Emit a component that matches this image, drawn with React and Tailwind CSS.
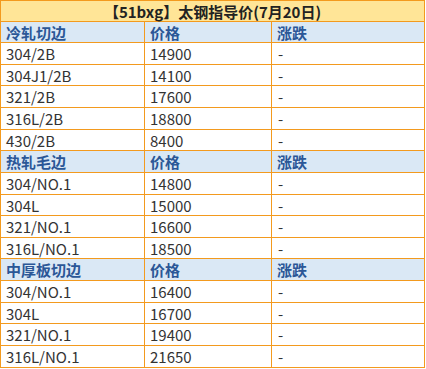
import React from "react";

const sections = [
  {
    title: "冷轧切边",
    h: 21,
    rows: [
      ["304/2B", "14900", 22],
      ["304J1/2B", "14100", 21],
      ["321/2B", "17600", 22],
      ["316L/2B", "18800", 22],
      ["430/2B", "8400", 21],
    ],
  },
  {
    title: "热轧毛边",
    h: 22,
    rows: [
      ["304/NO.1", "14800", 22],
      ["304L", "15000", 21],
      ["321/NO.1", "16600", 22],
      ["316L/NO.1", "18500", 21],
    ],
  },
  {
    title: "中厚板切边",
    h: 22,
    rows: [
      ["304/NO.1", "16400", 22],
      ["304L", "16700", 21],
      ["321/NO.1", "19400", 22],
      ["316L/NO.1", "21650", 22],
    ],
  },
];

const cell = "flex items-center border-r border-b border-[#f39a1e] px-[5px]";

const Row = ({ h, children, className = "" }) => (
  <div className={`flex ${h === 22 ? "h-[22px]" : "h-[21px]"} ${className}`}>{children}</div>
);

export default function App() {
  return (
    <div
      className="w-[426px] h-[369px] bg-white text-[15px] leading-none"
      style={{ fontFamily: '"Noto Sans CJK SC", "Noto Sans", sans-serif' }}
    >
      <div className="w-[425px] border-l border-t border-[#f39a1e]">
        {/* Title */}
        <Row h={21} className="bg-[#ffe597]">
          <div className="flex-1 flex items-center justify-center border-r border-b border-[#f39a1e] font-bold text-[#222]">
            【51bxg】太钢指导价(7月20日)
          </div>
        </Row>

        {sections.map((s) => (
          <React.Fragment key={s.title}>
            <Row h={s.h} className="bg-[#dae8f5] font-bold text-[#2b5797]">
              <div className={`${cell} w-[144px]`}>{s.title}</div>
              <div className={`${cell} w-[127px]`}>价格</div>
              <div className={`${cell} w-[153px]`}>涨跌</div>
            </Row>
            {s.rows.map(([name, price, h], i) => (
              <Row key={i} h={h} className="text-[#333]">
                <div className={`${cell} w-[144px]`}>{name}</div>
                <div className={`${cell} w-[127px]`}>{price}</div>
                <div className={`${cell} w-[153px] pl-[6px]`}>-</div>
              </Row>
            ))}
          </React.Fragment>
        ))}
      </div>
    </div>
  );
}
